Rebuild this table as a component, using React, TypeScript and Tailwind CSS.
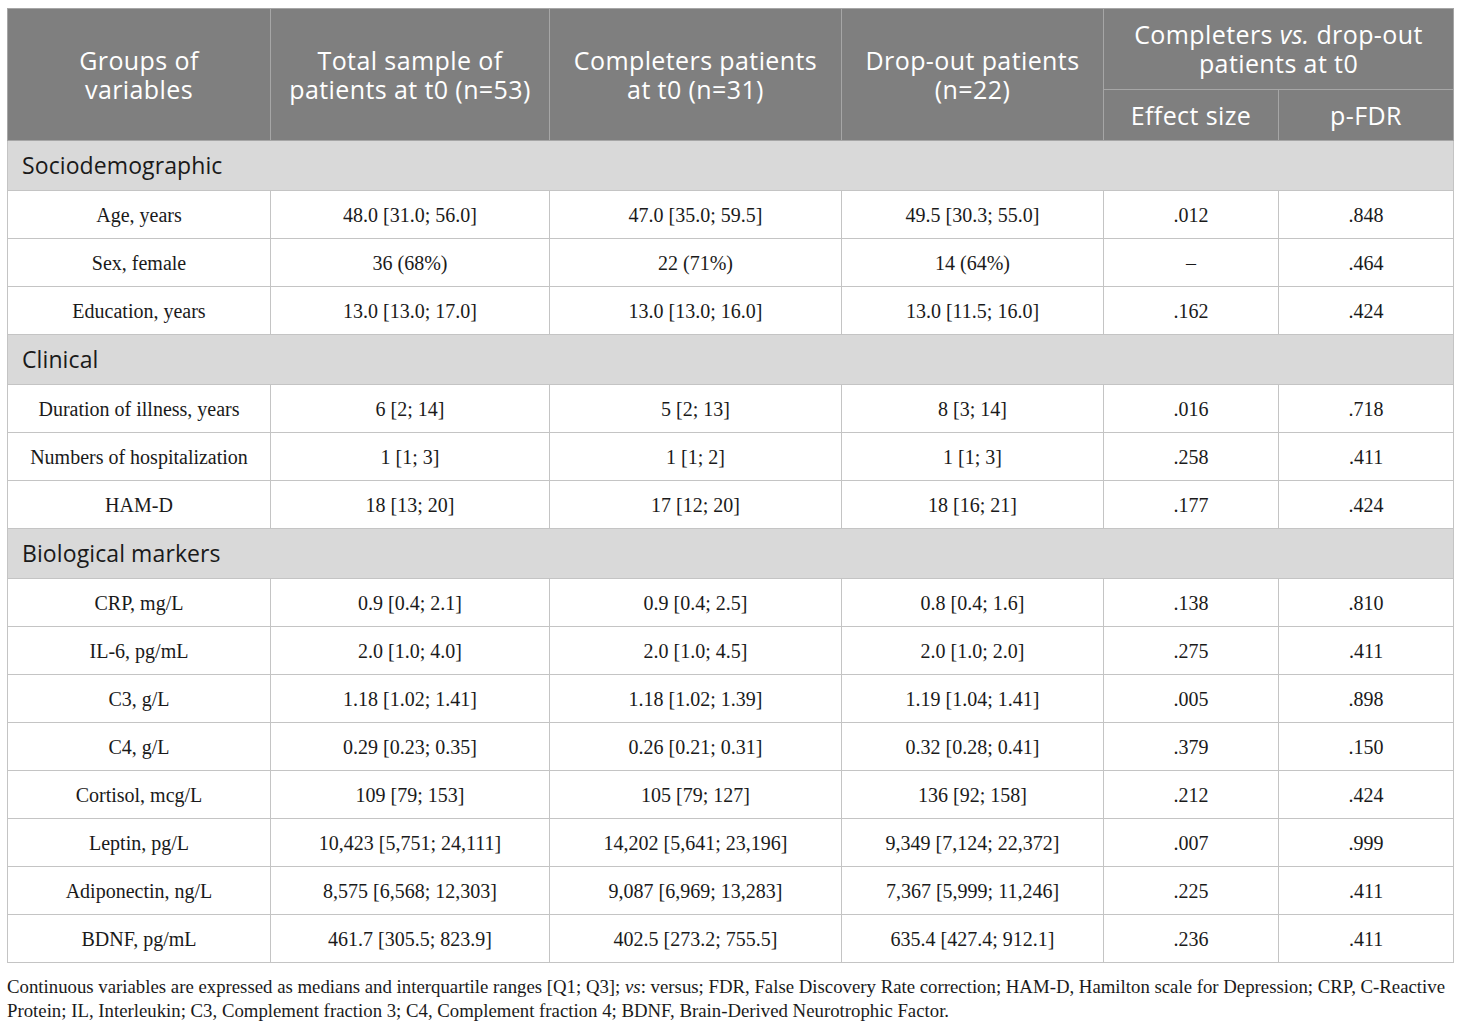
const sections: { title: string; rows: string[][] }[] = [
  {
    title: "Sociodemographic",
    rows: [
      ["Age, years", "48.0 [31.0; 56.0]", "47.0 [35.0; 59.5]", "49.5 [30.3; 55.0]", ".012", ".848"],
      ["Sex, female", "36 (68%)", "22 (71%)", "14 (64%)", "–", ".464"],
      ["Education, years", "13.0 [13.0; 17.0]", "13.0 [13.0; 16.0]", "13.0 [11.5; 16.0]", ".162", ".424"],
    ],
  },
  {
    title: "Clinical",
    rows: [
      ["Duration of illness, years", "6 [2; 14]", "5 [2; 13]", "8 [3; 14]", ".016", ".718"],
      ["Numbers of hospitalization", "1 [1; 3]", "1 [1; 2]", "1 [1; 3]", ".258", ".411"],
      ["HAM-D", "18 [13; 20]", "17 [12; 20]", "18 [16; 21]", ".177", ".424"],
    ],
  },
  {
    title: "Biological markers",
    rows: [
      ["CRP, mg/L", "0.9 [0.4; 2.1]", "0.9 [0.4; 2.5]", "0.8 [0.4; 1.6]", ".138", ".810"],
      ["IL-6, pg/mL", "2.0 [1.0; 4.0]", "2.0 [1.0; 4.5]", "2.0 [1.0; 2.0]", ".275", ".411"],
      ["C3, g/L", "1.18 [1.02; 1.41]", "1.18 [1.02; 1.39]", "1.19 [1.04; 1.41]", ".005", ".898"],
      ["C4, g/L", "0.29 [0.23; 0.35]", "0.26 [0.21; 0.31]", "0.32 [0.28; 0.41]", ".379", ".150"],
      ["Cortisol, mcg/L", "109 [79; 153]", "105 [79; 127]", "136 [92; 158]", ".212", ".424"],
      ["Leptin, pg/L", "10,423 [5,751; 24,111]", "14,202 [5,641; 23,196]", "9,349 [7,124; 22,372]", ".007", ".999"],
      ["Adiponectin, ng/L", "8,575 [6,568; 12,303]", "9,087 [6,969; 13,283]", "7,367 [5,999; 11,246]", ".225", ".411"],
      ["BDNF, pg/mL", "461.7 [305.5; 823.9]", "402.5 [273.2; 755.5]", "635.4 [427.4; 912.1]", ".236", ".411"],
    ],
  },
];

const th = "border border-[#a6a6a6] px-1 font-normal text-center";

export default function App() {
  return (
    <div className="bg-white pt-[8px] pl-[7px] w-[1460px]">
      <table className="table-fixed border-collapse w-[1446px] text-[#1a1a1a]">
        <colgroup>
          <col className="w-[263px]" />
          <col className="w-[279px]" />
          <col className="w-[292px]" />
          <col className="w-[262px]" />
          <col className="w-[175px]" />
          <col className="w-[175px]" />
        </colgroup>
        <thead className="bg-[#7f7f7f] text-white font-['Open_Sans',sans-serif] text-[25px] leading-[29px] tracking-[0.4px]">
          <tr className="h-[81px]">
            <th rowSpan={2} className={th}>
              Groups of
              <br />
              variables
            </th>
            <th rowSpan={2} className={th}>
              Total sample of
              <br />
              patients at t0 (n=53)
            </th>
            <th rowSpan={2} className={th}>
              Completers patients
              <br />
              at t0 (n=31)
            </th>
            <th rowSpan={2} className={th}>
              Drop-out patients
              <br />
              (n=22)
            </th>
            <th colSpan={2} className={th}>
              Completers <i>vs.</i> drop-out
              <br />
              patients at t0
            </th>
          </tr>
          <tr className="h-[51px]">
            <th className={th}>Effect size</th>
            <th className={th}>p-FDR</th>
          </tr>
        </thead>
        <tbody>
          {sections.map((s) => (
            <Section key={s.title} title={s.title} rows={s.rows} />
          ))}
        </tbody>
      </table>
      <p className="mt-[12px] whitespace-nowrap font-['Liberation_Serif',serif] text-[18.8px] leading-[24px] text-[#1a1a1a]">
        Continuous variables are expressed as medians and interquartile ranges [Q1; Q3]; <i>vs</i>: versus; FDR, False
        Discovery Rate correction; HAM-D, Hamilton scale for Depression; CRP, C-Reactive
        <br />
        Protein; IL, Interleukin; C3, Complement fraction 3; C4, Complement fraction 4; BDNF, Brain-Derived Neurotrophic
        Factor.
      </p>
    </div>
  );
}

function Section({ title, rows }: { title: string; rows: string[][] }) {
  return (
    <>
      <tr className="h-[50px] bg-[#d9d9d9]">
        <td
          colSpan={6}
          className="border border-[#c4c4c4] px-[14px] font-['Open_Sans',sans-serif] text-[23px] tracking-[0.1px] text-[#1a1a1a]"
        >
          {title}
        </td>
      </tr>
      {rows.map((r) => (
        <tr key={r[0]} className="h-[48px]">
          {r.map((c, i) => (
            <td
              key={i}
              className="border border-[#c4c4c4] text-center font-['Liberation_Serif',serif] text-[20px] text-[#1a1a1a]"
            >
              {c}
            </td>
          ))}
        </tr>
      ))}
    </>
  );
}
